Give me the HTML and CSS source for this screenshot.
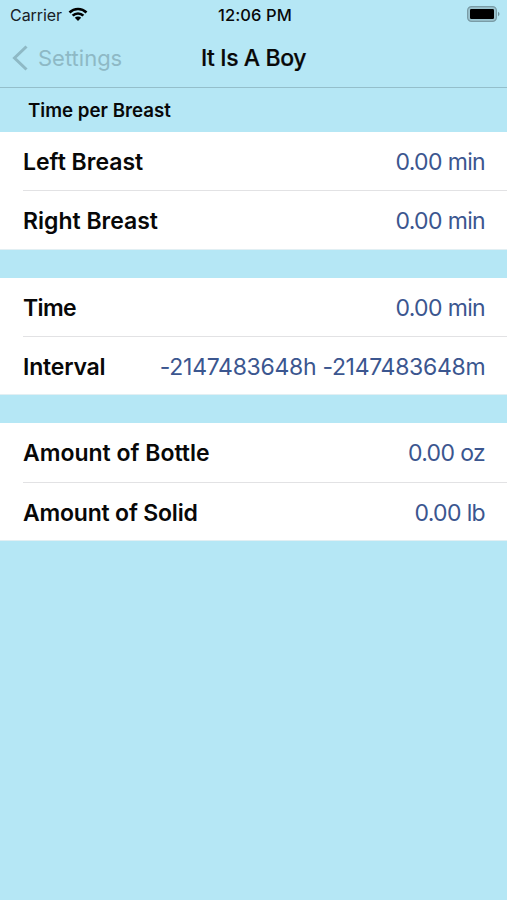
FILE: index.html
```html
<!DOCTYPE html>
<html lang="en">
<head>
<meta charset="utf-8">
<title>It Is A Boy</title>
<link rel="stylesheet" href="styles.css">
</head>
<body>
<div class="status">
  <div class="carrier"><span class="carrier-name">Carrier</span>
    <svg class="wifi" width="20" height="15" viewBox="0 0 20 15"><path d="M.6 4.5a13.5 13.5 0 0 1 18.8 0l-1.8 1.9a11 11 0 0 0-15.2 0zM3.7 7.7a9 9 0 0 1 12.6 0l-1.9 1.9a6.3 6.3 0 0 0-8.8 0zM6.8 10.8a4.6 4.6 0 0 1 6.4 0L10 14z"/></svg>
  </div>
  <div class="clock">12:06 PM</div>
  <svg class="battery" width="33" height="16" viewBox="0 0 33 16"><rect x=".6" y=".6" width="28.8" height="14.8" rx="4" fill="#9cc4cf" stroke="#7a9ca6" stroke-width="1.2"/><rect x="3" y="3" width="24" height="10" rx="1.2"/><path d="M31 5.8c2 .8 2 3.6 0 4.4z" fill="#6f929c"/></svg>
</div>
<header class="nav">
  <a class="back"><svg class="chevron" width="16" height="26" viewBox="0 0 16 26"><path d="M14.5 1.5 2.5 13l12 11.5"/></svg><span class="back-label">Settings</span></a>
  <h1 class="title">It Is A Boy</h1>
</header>
<main>
  <h2 class="section"><span class="section-label">Time per Breast</span></h2>
  <div class="group">
    <div class="row"><span class="label">Left Breast</span><span class="value">0.00 min</span></div>
    <div class="row"><span class="label">Right Breast</span><span class="value">0.00 min</span></div>
  </div>
  <div class="group group-compact">
    <div class="row"><span class="label label-time">Time</span><span class="value">0.00 min</span></div>
    <div class="row"><span class="label label-tight">Interval</span><span class="value value-long">-2147483648h -2147483648m</span></div>
  </div>
  <div class="group">
    <div class="row"><span class="label">Amount of Bottle</span><span class="value">0.00 oz</span></div>
    <div class="row"><span class="label label-tight">Amount of Solid</span><span class="value">0.00 lb</span></div>
  </div>
</main>
</body>
</html>
```
FILE: styles.css
```css
* { box-sizing: border-box; }
body { margin: 0; min-height: 900px; background: #b5e7f5; color: #080808; font-family: Inter, "Liberation Sans", sans-serif; }
.status { display: grid; grid-template-columns: 1fr auto 1fr; align-items: center; height: 28px; padding: 0 7px 0 10px; font-size: 16px; }
.carrier { display: flex; align-items: center; gap: 6px; padding-top: 1px; color: #182126; }
.carrier-name { letter-spacing: -.05px; }
.wifi { fill: #000; }
.clock { padding-top: 1px; font-weight: 500; font-size: 16.5px; letter-spacing: .1px; }
.battery { justify-self: end; }
.nav { display: grid; grid-template-columns: 1fr auto 1fr; align-items: center; height: 60px; border-bottom: 1px solid #94bfcb; }
.back { display: flex; align-items: center; gap: 10px; padding-left: 12px; color: #8eb9c5; font-size: 22px; }
.chevron { fill: none; stroke: currentColor; stroke-width: 3; }
.title { margin: 0; font-size: 23px; font-weight: 500; letter-spacing: -.4px; -webkit-text-stroke: .2px currentColor; }
.section { margin: 0; height: 44px; padding: 0 28px; display: flex; align-items: center; font-size: 18.7px; font-weight: 600; }
.group { height: 118px; margin-bottom: 28px; background: #fff; border-bottom: 1px solid #e2eff3; }
.group-compact { height: 117px; }
.row { display: flex; justify-content: space-between; align-items: center; height: 58px; margin-left: 23px; padding: 1px 22px 0 0; font-size: 23px; white-space: nowrap; }
.row + .row { height: 59px; padding-top: 2px; border-top: 1px solid #e2e2e4; }
.group-compact .row + .row { height: 58px; }
.group:last-child { margin-bottom: 0; }
.group:last-child .row:first-child { height: 59px; }
.group:last-child .row + .row { height: 58px; }
.label { font-weight: 600; }
.label-tight { letter-spacing: -.2px; }
.label-time { letter-spacing: -.6px; }
.value { color: #3b568f; letter-spacing: -.65px; }
.value-long { letter-spacing: -.3px; margin-right: -.3px; }
```
